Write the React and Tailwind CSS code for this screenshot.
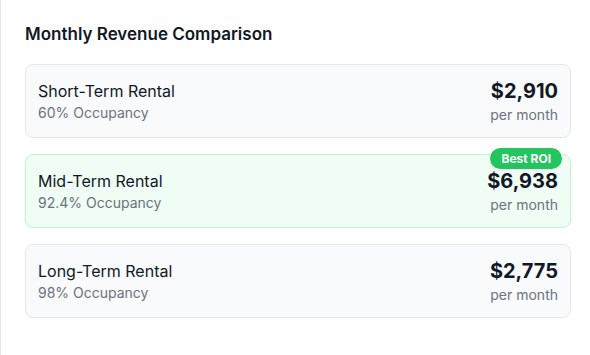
import React from 'react';

const plans = [
  { name: 'Short-Term Rental', occupancy: '60% Occupancy', revenue: '$2,910', best: false },
  { name: 'Mid-Term Rental', occupancy: '92.4% Occupancy', revenue: '$6,938', best: true },
  { name: 'Long-Term Rental', occupancy: '98% Occupancy', revenue: '$2,775', best: false },
];

const RevenueCard = ({ plan }) => (
  <div
    className={
      plan.best
        ? 'relative flex items-center justify-between rounded-lg border border-[#bbf7d0] bg-[#f0fdf4] px-3 py-3'
        : 'relative flex items-center justify-between rounded-lg border border-[#e5e7eb] bg-[#f9fafb] px-3 py-3'
    }
  >
    {plan.best && (
      <span className="absolute -top-[7px] right-2 rounded-full bg-[#22c55e] px-[11px] py-[3px] text-xs font-bold leading-[15px] text-white">
        Best ROI
      </span>
    )}
    <div>
      <p className="text-base text-[#111827]">{plan.name}</p>
      <p className="text-sm text-[#6b7280]">{plan.occupancy}</p>
    </div>
    <div className="text-right">
      <p className="text-xl font-bold text-[#111827]">{plan.revenue}</p>
      <p className="text-sm text-[#6b7280]">per month</p>
    </div>
  </div>
);

export default function App() {
  return (
    <div className="min-h-[355px] w-[610px] border-l border-[#e5e7eb] bg-white px-6 pt-5 font-['Inter',sans-serif]">
      <h2 className="mb-4 text-[17px] leading-7 font-semibold text-[#111827]">Monthly Revenue Comparison</h2>
      <div className="flex w-[546px] flex-col gap-4">
        {plans.map((plan) => (
          <RevenueCard key={plan.name} plan={plan} />
        ))}
      </div>
    </div>
  );
}
